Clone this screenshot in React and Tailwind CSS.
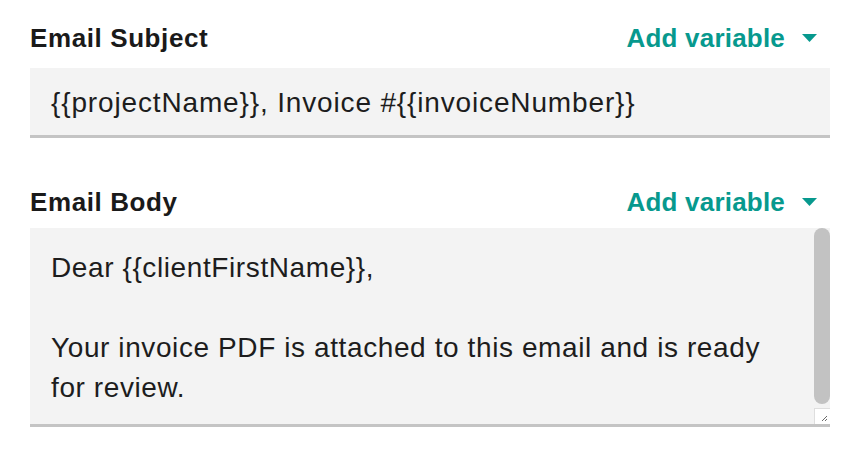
const font = { fontFamily: '"Liberation Sans", Arial, sans-serif' };

const AddVariable = () => (
  <button className="flex items-center text-[26px] font-bold leading-[28px] tracking-[0.2px] text-[#07998e]">
    Add variable
    <svg width="15" height="8" viewBox="0 0 15 8" className="ml-[17px] mr-[13px]">
      <path d="M0 0 H15 L7.5 8 Z" fill="#07998e" />
    </svg>
  </button>
);

const FieldHeader = ({ label }) => (
  <div className="flex h-[28px] items-center justify-between">
    <label className="text-[26px] font-bold leading-[28px] tracking-[0.6px] text-[#1a1a1a]">
      {label}
    </label>
    <AddVariable />
  </div>
);

export default function App() {
  return (
    <div className="w-[856px] h-[450px] bg-white pl-[30px] pr-[26px] pt-[24px]" style={font}>
      <FieldHeader label="Email Subject" />
      <div className="mt-[16px] border-b-[3px] border-[#c4c4c4] bg-[#f3f3f3] pl-[21px] pt-[15px] pb-[12px] text-[28px] leading-[40px] tracking-[0.85px] text-[#1d1d1d] whitespace-nowrap">
        {"{{projectName}}, Invoice #{{invoiceNumber}}"}
      </div>

      <div className="mt-[50px]">
        <FieldHeader label="Email Body" />
      </div>
      <div className="relative mt-[12px] border-b-[3px] border-[#c4c4c4] bg-[#f3f3f3] pl-[21px] pt-[20px] pb-[16px] text-[28px] leading-[40px] tracking-[0.6px] text-[#1d1d1d]">
        <div className="whitespace-nowrap">{"Dear {{clientFirstName}},"}</div>
        <div className="h-[40px]" />
        <div className="whitespace-nowrap">Your invoice PDF is attached to this email and is ready</div>
        <div className="whitespace-nowrap">for review.</div>

        <div className="absolute right-0 top-0 h-[176px] w-[16px] rounded-full bg-[#c2c2c2]" />
        <div className="absolute right-0 bottom-0 flex h-[16px] w-[16px] items-end justify-end border-l border-t border-[#dedede] bg-white">
          <svg width="8" height="8" viewBox="0 0 8 8" className="mr-[2px] mb-[2px]">
            <path d="M7 2 L2 7 M7 5 L5 7" stroke="#6b6b6b" strokeWidth="1" />
          </svg>
        </div>
      </div>
    </div>
  );
}
